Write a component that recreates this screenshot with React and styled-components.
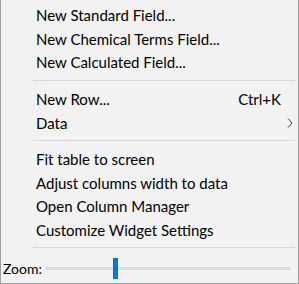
import React from 'react';
import styled, { createGlobalStyle } from 'styled-components';

const GlobalStyle = createGlobalStyle`
  html, body {
    margin: 0;
    padding: 0;
    background: #f2f2f2;
  }
  * {
    box-sizing: border-box;
  }
`;

const Menu = styled.div`
  width: 299px;
  height: 284px;
  background: #f2f2f2;
  border: 1px solid #a0a0a0;
  border-top: none;
  padding-top: 3.5px;
  display: flex;
  flex-direction: column;
  font-family: Lato, 'Noto Sans', sans-serif;
  font-size: 15px;
  color: #000;
  overflow: hidden;
`;

const Item = styled.div`
  height: 23.6px;
  flex: none;
  display: flex;
  align-items: center;
  padding-left: 35px;
  padding-right: 5px;
  white-space: nowrap;
`;

const Label = styled.span`
  flex: 1;
`;

const Shortcut = styled.span`
  margin-right: 12px;
`;

const Separator = styled.div`
  flex: none;
  height: 1px;
  margin: 5.5px 3px 6.5px 32px;
  background: #d7d7d7;
`;

const ZoomRow = styled.div`
  flex: 1;
  display: flex;
  align-items: center;
  padding: 0 7px 1px 2px;
  font-size: 14px;
`;

const ZoomLabel = styled.span`
  width: 43px;
  flex: none;
`;

const Track = styled.div`
  position: relative;
  flex: 1;
  height: 3px;
  background: #e7e7e7;
  border: 1px solid #d6d6d6;
`;

const Thumb = styled.div`
  position: absolute;
  top: -10px;
  width: 5px;
  height: 21px;
  background: #0078d7;
`;

const Chevron = () => (
  <svg width="6" height="10" viewBox="0 0 6 10">
    <path d="M1 0.5 L5 5 L1 9.5" fill="none" stroke="#404040" strokeWidth="1" />
  </svg>
);

const groups = [
  [
    { label: 'New Standard Field...' },
    { label: 'New Chemical Terms Field...' },
    { label: 'New Calculated Field...' },
  ],
  [
    { label: 'New Row...', shortcut: 'Ctrl+K' },
    { label: 'Data', submenu: true },
  ],
  [
    { label: 'Fit table to screen' },
    { label: 'Adjust columns width to data' },
    { label: 'Open Column Manager' },
    { label: 'Customize Widget Settings' },
  ],
];

export default function App() {
  const zoom = 0.27;
  return (
    <>
      <GlobalStyle />
      <Menu>
        {groups.map((group, gi) => (
          <React.Fragment key={gi}>
            {group.map((item) => (
              <Item key={item.label}>
                <Label>{item.label}</Label>
                {item.shortcut && <Shortcut>{item.shortcut}</Shortcut>}
                {item.submenu && <Chevron />}
              </Item>
            ))}
            <Separator />
          </React.Fragment>
        ))}
        <ZoomRow>
          <ZoomLabel>Zoom:</ZoomLabel>
          <Track>
            <Thumb style={{ left: `${zoom * 100}%` }} />
          </Track>
        </ZoomRow>
      </Menu>
    </>
  );
}
